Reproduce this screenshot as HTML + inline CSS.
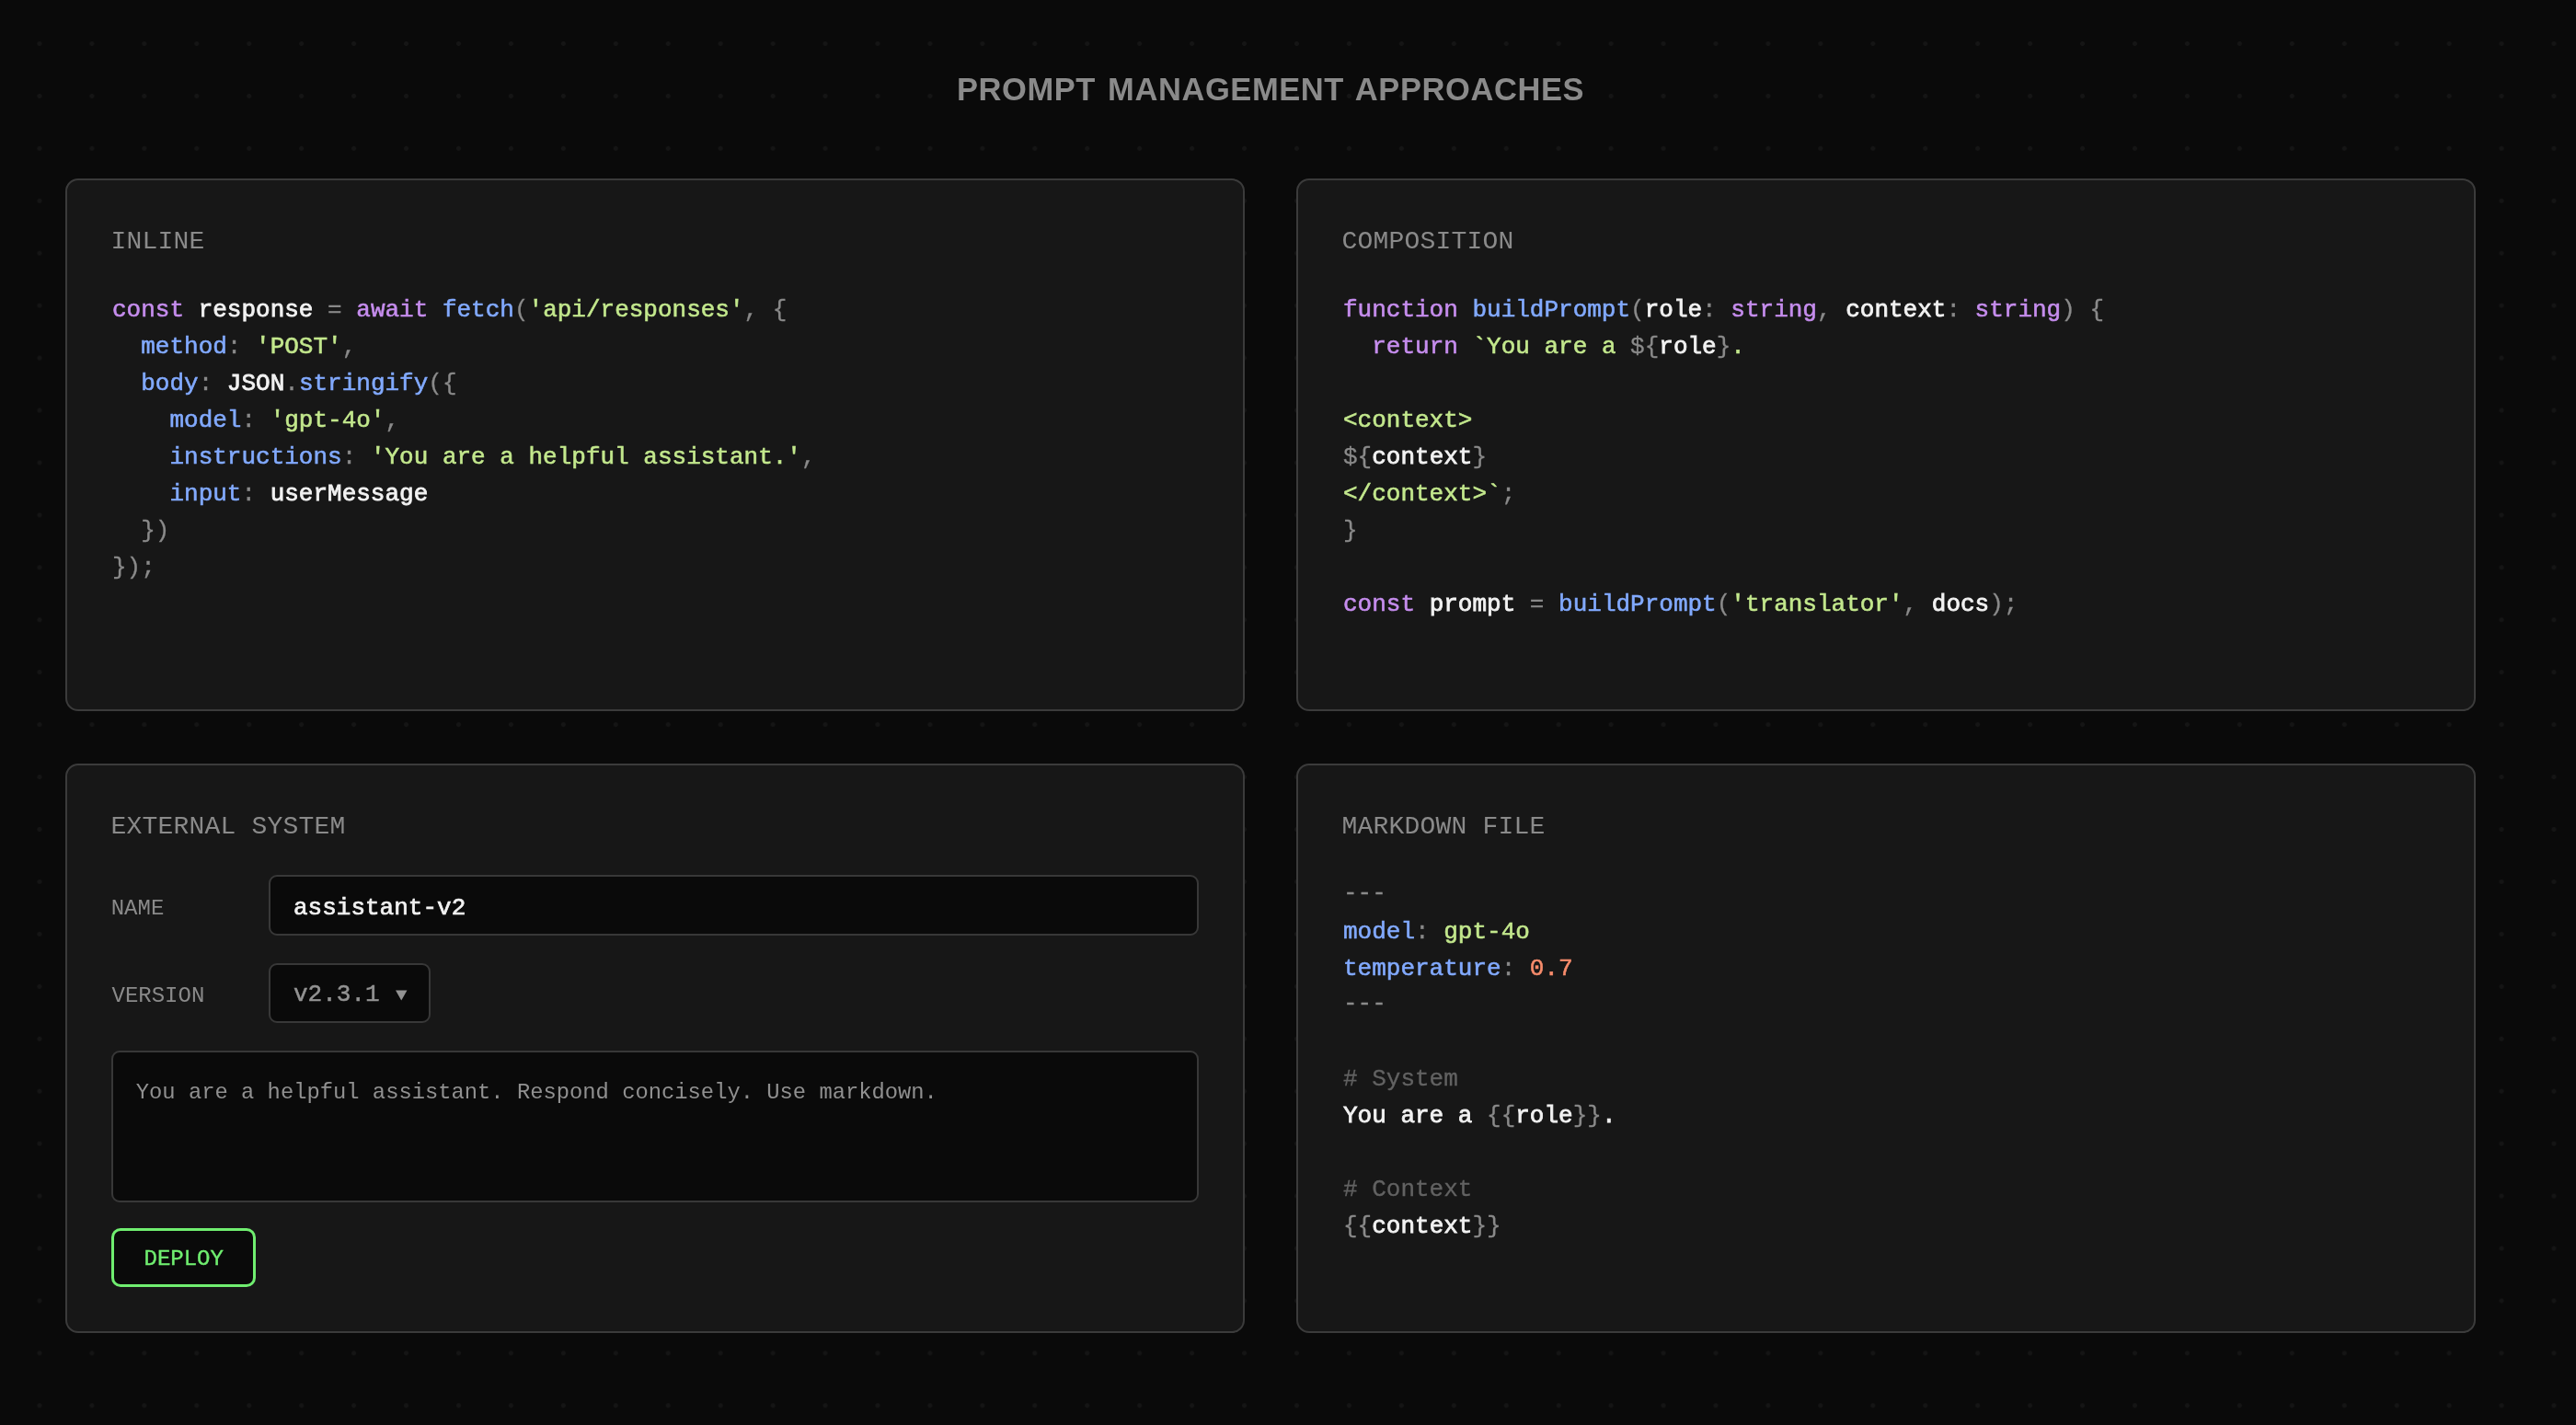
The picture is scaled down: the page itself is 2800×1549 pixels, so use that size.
<!DOCTYPE html>
<html>
<head>
<meta charset="utf-8">
<style>
html,body{margin:0;padding:0;}
body{
  width:2800px;height:1549px;overflow:hidden;position:relative;
  background-color:#0a0a0a;
  background-image:radial-gradient(circle at center, #151515 0, #151515 2px, rgba(21,21,21,0) 3px);
  background-size:56.95px 56.95px;
  background-position:14.5px 19px;
  font-family:"Liberation Mono", monospace;
}
.title{
  will-change:transform;
  position:absolute;left:0;width:2762px;top:72px;text-align:center;
  font-family:"Liberation Sans", sans-serif;font-weight:700;
  font-size:34.5px;letter-spacing:0.58px;word-spacing:3px;color:#8a8a8a;line-height:50px;white-space:nowrap;
}
.panel{
  position:absolute;box-sizing:border-box;will-change:transform;
  background:#171717;border:2px solid #3b3b3b;border-radius:14px;
}
.p1{left:71px;top:194px;width:1282px;height:579px;}
.p2{left:1409px;top:194px;width:1282px;height:579px;}
.p3{left:71px;top:830px;width:1282px;height:619px;}
.p4{left:1409px;top:830px;width:1282px;height:619px;}
.label{
  position:absolute;left:47.5px;
  font-size:28px;letter-spacing:0.2px;color:#8a8a8a;line-height:40px;white-space:pre;
}
pre.code{
  position:absolute;left:49px;margin:0;
  font-family:"Liberation Mono", monospace;
  font-size:26px;line-height:40px;color:#f0f0f0;white-space:pre;
}
.code span{-webkit-text-stroke:0.55px currentColor;}
.code .p{-webkit-text-stroke:0.3px currentColor;}
.k{color:#c68dee;}
.f{color:#82aaff;}
.s{color:#c3e88d;}
.p{color:#8a8a8a;}
.code .w{color:#f2f2f2;-webkit-text-stroke:0.8px currentColor;}
.o{color:#f78c6c;}
.code .c{color:#626262;-webkit-text-stroke:0.3px currentColor;}
.flabel{position:absolute;left:50px;font-size:24px;color:#8a8a8a;line-height:40px;white-space:pre;}
.input{position:absolute;box-sizing:border-box;background:#0a0a0a;border:2px solid #383838;border-radius:9px;}
.in-name{left:219px;top:119px;width:1011px;height:66px;}
.in-ver{left:219px;top:215px;width:176px;height:65px;}
.ta{left:48px;top:309.5px;width:1182px;height:165px;}
.btn{position:absolute;box-sizing:border-box;left:48px;top:503px;width:156.5px;height:64px;background:#0a0a0a;border:3px solid #70ee70;border-radius:10px;}
.intext{position:absolute;white-space:pre;line-height:40px;}
</style>
</head>
<body>
<div class="title">PROMPT MANAGEMENT APPROACHES</div>

<div class="panel p1">
  <div class="label" style="top:47px">INLINE</div>
<pre class="code" style="top:121px"><span class="k">const</span> <span class="w">response</span> <span class="p">=</span> <span class="k">await</span> <span class="f">fetch</span><span class="p">(</span><span class="s">'api/responses'</span><span class="p">,</span> <span class="p">{</span>
  <span class="f">method</span><span class="p">:</span> <span class="s">'POST'</span><span class="p">,</span>
  <span class="f">body</span><span class="p">:</span> <span class="w">JSON</span><span class="p">.</span><span class="f">stringify</span><span class="p">({</span>
    <span class="f">model</span><span class="p">:</span> <span class="s">'gpt-4o'</span><span class="p">,</span>
    <span class="f">instructions</span><span class="p">:</span> <span class="s">'You are a helpful assistant.'</span><span class="p">,</span>
    <span class="f">input</span><span class="p">:</span> <span class="w">userMessage</span>
  <span class="p">})</span>
<span class="p">});</span></pre>
</div>

<div class="panel p2">
  <div class="label" style="top:47px">COMPOSITION</div>
<pre class="code" style="top:121px"><span class="k">function</span> <span class="f">buildPrompt</span><span class="p">(</span><span class="w">role</span><span class="p">:</span> <span class="k">string</span><span class="p">,</span> <span class="w">context</span><span class="p">:</span> <span class="k">string</span><span class="p">)</span> <span class="p">{</span>
  <span class="k">return</span> <span class="s">`You are a </span><span class="p">${</span><span class="w">role</span><span class="p">}</span><span class="s">.</span>

<span class="s">&lt;context&gt;</span>
<span class="p">${</span><span class="w">context</span><span class="p">}</span>
<span class="s">&lt;/context&gt;`</span><span class="p">;</span>
<span class="p">}</span>

<span class="k">const</span> <span class="w">prompt</span> <span class="p">=</span> <span class="f">buildPrompt</span><span class="p">(</span><span class="s">'translator'</span><span class="p">,</span> <span class="w">docs</span><span class="p">);</span></pre>
</div>

<div class="panel p3">
  <div class="label" style="top:47px">EXTERNAL SYSTEM</div>
  <div class="flabel" style="top:135.5px;left:47.7px">NAME</div>
  <div class="input in-name"><div class="intext" style="left:25px;top:14px;font-size:26px;color:#f2f2f2;-webkit-text-stroke:0.7px #f2f2f2;">assistant-v2</div></div>
  <div class="flabel" style="top:230.5px;left:48.5px">VERSION</div>
  <div class="input in-ver"><div class="intext" style="left:25px;top:12px;font-size:26px;color:#939393;-webkit-text-stroke:0.5px #939393;">v2.3.1</div>
    <svg style="position:absolute;left:136px;top:26.5px" width="13" height="12" viewBox="0 0 13 12"><path d="M0 0.5 L12.5 0.5 L6.25 11.5 Z" fill="#939393"/></svg></div>
  <div class="input ta"><div class="intext" style="left:24.8px;top:24px;font-size:23.8px;color:#909090;">You are a helpful assistant. Respond concisely. Use markdown.</div></div>
  <div class="btn"><div class="intext" style="left:32.5px;top:11px;font-size:24px;color:#70ee70;-webkit-text-stroke:0.4px #70ee70;">DEPLOY</div></div>
</div>

<div class="panel p4">
  <div class="label" style="top:47px">MARKDOWN FILE</div>
<pre class="code" style="top:121px"><span class="p" style="position:relative;top:-2.5px">---</span>
<span class="f">model</span><span class="p">:</span> <span class="s">gpt-4o</span>
<span class="f">temperature</span><span class="p">:</span> <span class="o">0.7</span>
<span class="p" style="position:relative;top:-2.5px">---</span>

<span class="c"># System</span>
<span class="w">You are a </span><span class="p">{{</span><span class="w">role</span><span class="p">}}</span><span class="w">.</span>

<span class="c"># Context</span>
<span class="p">{{</span><span class="w">context</span><span class="p">}}</span></pre>
</div>
</body>
</html>
